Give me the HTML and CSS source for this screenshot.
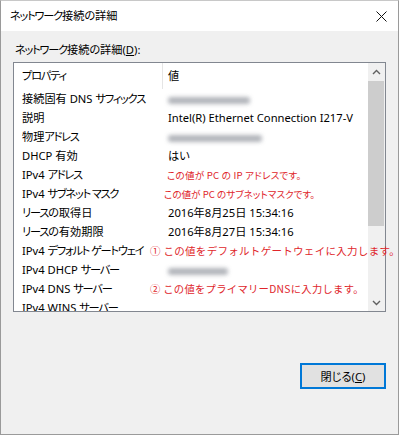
FILE: index.html
```html
<!DOCTYPE html>
<html lang="ja">
<head>
<meta charset="utf-8">
<title>ネットワーク接続の詳細</title>
<link rel="stylesheet" href="styles.css">
</head>
<body>
<div class="window">
  <div class="titlebar">
    <span class="title"><span class="k">ネットワーク</span>接続の詳細</span>
    <span class="close"><svg width="11" height="11" viewBox="0 0 11 11"><path d="M0.5 0.5 L10.5 10.5 M10.5 0.5 L0.5 10.5" stroke="#111" stroke-width="1" fill="none"/></svg></span>
  </div>
  <div class="content">
    <div class="label"><span class="k">ネットワーク</span>接続の詳細(<u>D</u>):</div>
    <div class="listbox">
      <div class="list">
        <div class="row header"><div class="c1"><span class="k">プロパティ</span></div><div class="c2 sep">値</div></div>
        <div class="row"><div class="c1">接続固有 DNS <span class="k">サフィックス</span></div><div class="c2"><span class="blur w85"></span></div></div>
        <div class="row"><div class="c1">説明</div><div class="c2">Intel(R) Ethernet Connection I217-V</div></div>
        <div class="row"><div class="c1">物理<span class="k">アドレス</span></div><div class="c2"><span class="blur w97"></span></div></div>
        <div class="row"><div class="c1">DHCP 有効</div><div class="c2">はい</div></div>
        <div class="row"><div class="c1">IPv4 <span class="k">アドレス</span></div><div class="c2"><span class="note n1">この値が PC の IP アドレスです。</span></div></div>
        <div class="row"><div class="c1">IPv4 <span class="k">サブネット マスク</span></div><div class="c2"><span class="note n2">この値が PC のサブネットマスクです。</span></div></div>
        <div class="row"><div class="c1"><span class="k">リース</span>の取得日</div><div class="c2">2016年8月25日 15:34:16</div></div>
        <div class="row"><div class="c1"><span class="k">リース</span>の有効期限</div><div class="c2">2016年8月27日 15:34:16</div></div>
        <div class="row"><div class="c1">IPv4 <span class="k">デフォルト ゲートウェイ</span></div><div class="c2"><span class="note n3">① この値をデフォルトゲートウェイに入力します。</span></div></div>
        <div class="row"><div class="c1">IPv4 DHCP <span class="k">サーバー</span></div><div class="c2"><span class="blur w62"></span></div></div>
        <div class="row"><div class="c1">IPv4 DNS <span class="k">サーバー</span></div><div class="c2"><span class="note n4">② この値をプライマリーDNSに入力します。</span></div></div>
        <div class="row last"><div class="c1">IPv4 WINS <span class="k">サーバー</span></div><div class="c2"></div></div>
      </div>
      <div class="scrollbar">
        <div class="arrow"><svg width="9" height="6" viewBox="0 0 9 6"><path d="M1 5 L4.5 1.5 L8 5" stroke="#606060" stroke-width="1.4" fill="none"/></svg></div>
        <div class="track"><div class="thumb"></div></div>
        <div class="arrow"><svg width="9" height="6" viewBox="0 0 9 6"><path d="M1 1 L4.5 4.5 L8 1" stroke="#606060" stroke-width="1.4" fill="none"/></svg></div>
      </div>
    </div>
    <div class="footer">
      <button class="btn">閉じる(<u>C</u>)</button>
    </div>
  </div>
</div>
</body>
</html>
```
FILE: styles.css
```css
html, body {
  margin: 0;
  padding: 0;
  background: #ffffff;
}
body {
  font-family: "Noto Sans", "Noto Sans CJK JP", sans-serif;
  font-size: 11.2px;
  color: #000;
  font-feature-settings: "palt";
}
.k {
  letter-spacing: -1.2px;
}
.window {
  width: 399px;
  height: 435px;
  box-sizing: border-box;
  border: 1px solid #9a9a9a;
  border-top-color: #c8c8c8;
  background: #f0f0f0;
  display: flex;
  flex-direction: column;
  overflow: hidden;
}
.titlebar {
  height: 30px;
  background: #fff;
  display: flex;
  align-items: center;
  justify-content: space-between;
  padding: 0 11px 0 9px;
}
.title {
  line-height: 16px;
}
.close {
  display: flex;
  width: 11px;
  height: 11px;
}
.content {
  flex: 1;
  padding: 11px 12px 0 12px;
  display: flex;
  flex-direction: column;
}
.label {
  line-height: 16px;
  height: 16px;
  padding-left: 2px;
  margin-bottom: 4px;
}
.listbox {
  height: 250px;
  box-sizing: border-box;
  border: 1px solid #828790;
  background: #fff;
  display: flex;
  overflow: visible;
}
.list {
  flex: 1;
  min-width: 0;
  overflow-x: visible;
  overflow-y: clip;
  position: relative;
  z-index: 1;
}
.row {
  display: flex;
  height: 19px;
  line-height: 19px;
  white-space: nowrap;
}
.row.header {
  height: 26px;
  line-height: 26px;
}
.c1 {
  width: 140px;
  flex: none;
  padding-left: 8px;
}
.c2 {
  flex: 1;
  min-width: 0;
  padding-left: 6px;
}
.c2.sep {
  border-left: 1px solid #e5e5e5;
  padding-left: 5px;
}
.blur {
  display: inline-block;
  height: 7px;
  vertical-align: middle;
  background: #a4a7ae;
  filter: blur(2px);
  border-radius: 3px;
  opacity: 0.85;
}
.w85 { width: 82px; }
.w97 { width: 94px; }
.w62 { width: 60px; }
.note {
  display: inline-block;
  font-family: "Noto Sans CJK JP", sans-serif;
  color: #e0262b;
}
.n1 { margin-left: -1px; font-size: 9.6px; letter-spacing: 0.2px; }
.n2 { margin-left: -4px; font-size: 9.6px; letter-spacing: 0px; }
.n3 { margin-left: -18px; font-size: 10.5px; letter-spacing: 0.3px; font-feature-settings: normal; }
.n4 { margin-left: -18px; font-size: 10.3px; letter-spacing: 0.3px; font-feature-settings: normal; }
.scrollbar {
  width: 17px;
  flex: none;
  background: #f0f0f0;
  display: flex;
  flex-direction: column;
}
.arrow {
  height: 17px;
  display: flex;
  align-items: center;
  justify-content: center;
}
.track {
  flex: 1;
  padding: 1px 1px 0 0;
}
.thumb {
  height: 145px;
  background: #cdcdcd;
}
.footer {
  display: flex;
  justify-content: flex-end;
  margin-top: 51px;
}
.btn {
  width: 86px;
  height: 26px;
  box-sizing: border-box;
  border: 2px solid #0078d7;
  background: #e1e1e1;
  font-family: "Noto Sans", "Noto Sans CJK JP", sans-serif;
  font-size: 11.2px;
  font-feature-settings: "palt";
  color: #000;
  padding: 0;
}
```
